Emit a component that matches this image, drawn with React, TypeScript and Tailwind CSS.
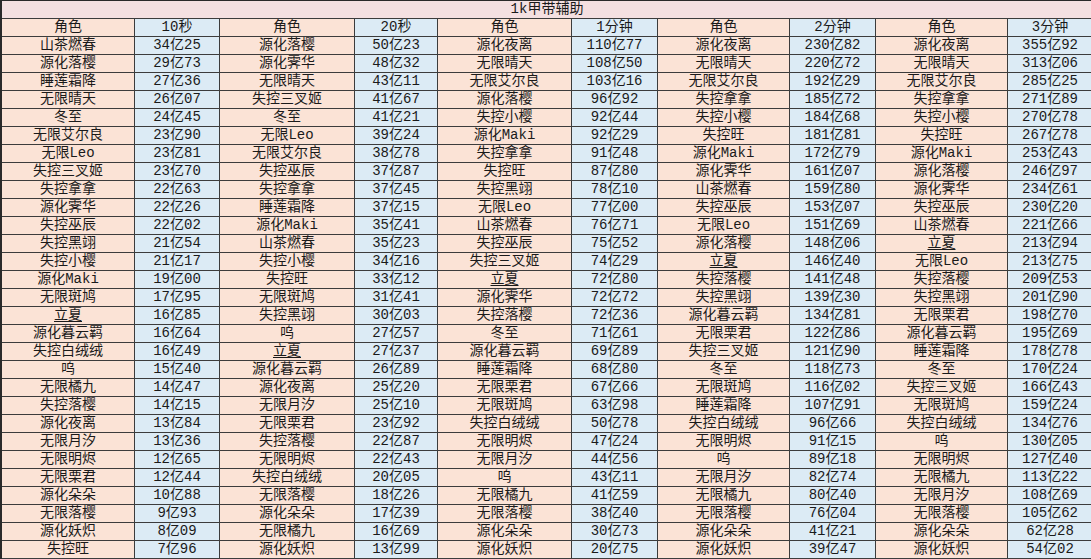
import React from "react";

type Pair = [string, string];

const cols: Pair[][] = [
  [
    ["山茶燃春", "34亿25"], ["源化落樱", "29亿73"], ["睡莲霜降", "27亿36"], ["无限晴天", "26亿07"],
    ["冬至", "24亿45"], ["无限艾尔良", "23亿90"], ["无限Leo", "23亿81"], ["失控三叉姬", "23亿70"],
    ["失控拿拿", "22亿63"], ["源化霁华", "22亿26"], ["失控巫辰", "22亿02"], ["失控黑翊", "21亿54"],
    ["失控小樱", "21亿17"], ["源化Maki", "19亿00"], ["无限斑鸠", "17亿95"], ["立夏", "16亿85"],
    ["源化暮云羁", "16亿64"], ["失控白绒绒", "16亿49"], ["呜", "15亿40"], ["无限橘九", "14亿47"],
    ["失控落樱", "14亿15"], ["源化夜离", "13亿84"], ["无限月汐", "13亿36"], ["无限明烬", "12亿65"],
    ["无限栗君", "12亿44"], ["源化朵朵", "10亿88"], ["无限落樱", "9亿93"], ["源化妖炽", "8亿09"],
    ["失控旺", "7亿96"],
  ],
  [
    ["源化落樱", "50亿23"], ["源化霁华", "48亿32"], ["无限晴天", "43亿11"], ["失控三叉姬", "41亿67"],
    ["冬至", "41亿21"], ["无限Leo", "39亿24"], ["无限艾尔良", "38亿78"], ["失控巫辰", "37亿87"],
    ["失控拿拿", "37亿45"], ["睡莲霜降", "37亿15"], ["源化Maki", "35亿41"], ["山茶燃春", "35亿23"],
    ["失控小樱", "34亿16"], ["失控旺", "33亿12"], ["无限斑鸠", "31亿41"], ["失控黑翊", "30亿03"],
    ["呜", "27亿57"], ["立夏", "27亿37"], ["源化暮云羁", "26亿89"], ["源化夜离", "25亿20"],
    ["无限月汐", "25亿10"], ["无限栗君", "23亿92"], ["失控落樱", "22亿87"], ["无限明烬", "22亿43"],
    ["失控白绒绒", "20亿05"], ["无限落樱", "18亿26"], ["源化朵朵", "17亿39"], ["无限橘九", "16亿69"],
    ["源化妖炽", "13亿99"],
  ],
  [
    ["源化夜离", "110亿77"], ["无限晴天", "108亿50"], ["无限艾尔良", "103亿16"], ["源化落樱", "96亿92"],
    ["失控小樱", "92亿44"], ["源化Maki", "92亿29"], ["失控拿拿", "91亿48"], ["失控旺", "87亿80"],
    ["失控黑翊", "78亿10"], ["无限Leo", "77亿00"], ["山茶燃春", "76亿71"], ["失控巫辰", "75亿52"],
    ["失控三叉姬", "74亿29"], ["立夏", "72亿80"], ["源化霁华", "72亿72"], ["失控落樱", "72亿36"],
    ["冬至", "71亿61"], ["源化暮云羁", "69亿89"], ["睡莲霜降", "68亿80"], ["无限栗君", "67亿66"],
    ["无限斑鸠", "63亿98"], ["失控白绒绒", "50亿78"], ["无限明烬", "47亿24"], ["无限月汐", "44亿56"],
    ["呜", "43亿11"], ["无限橘九", "41亿59"], ["无限落樱", "38亿40"], ["源化朵朵", "30亿73"],
    ["源化妖炽", "20亿75"],
  ],
  [
    ["源化夜离", "230亿82"], ["无限晴天", "220亿72"], ["无限艾尔良", "192亿29"], ["失控拿拿", "185亿72"],
    ["失控小樱", "184亿68"], ["失控旺", "181亿81"], ["源化Maki", "172亿79"], ["源化霁华", "161亿07"],
    ["山茶燃春", "159亿80"], ["失控巫辰", "153亿07"], ["无限Leo", "151亿69"], ["源化落樱", "148亿06"],
    ["立夏", "146亿40"], ["失控落樱", "141亿48"], ["失控黑翊", "139亿30"], ["源化暮云羁", "134亿81"],
    ["无限栗君", "122亿86"], ["失控三叉姬", "121亿90"], ["冬至", "118亿73"], ["无限斑鸠", "116亿02"],
    ["睡莲霜降", "107亿91"], ["失控白绒绒", "96亿66"], ["无限明烬", "91亿15"], ["呜", "89亿18"],
    ["无限月汐", "82亿74"], ["无限橘九", "80亿40"], ["无限落樱", "76亿04"], ["源化朵朵", "41亿21"],
    ["源化妖炽", "39亿47"],
  ],
  [
    ["源化夜离", "355亿92"], ["无限晴天", "313亿06"], ["无限艾尔良", "285亿25"], ["失控拿拿", "271亿89"],
    ["失控小樱", "270亿78"], ["失控旺", "267亿78"], ["源化Maki", "253亿43"], ["源化落樱", "246亿97"],
    ["源化霁华", "234亿61"], ["失控巫辰", "230亿20"], ["山茶燃春", "221亿66"], ["立夏", "213亿94"],
    ["无限Leo", "213亿75"], ["失控落樱", "209亿53"], ["失控黑翊", "201亿90"], ["无限栗君", "198亿70"],
    ["源化暮云羁", "195亿69"], ["睡莲霜降", "178亿78"], ["冬至", "170亿24"], ["失控三叉姬", "166亿43"],
    ["无限斑鸠", "159亿24"], ["失控白绒绒", "134亿76"], ["呜", "130亿05"], ["无限明烬", "127亿40"],
    ["无限橘九", "113亿22"], ["无限月汐", "108亿69"], ["无限落樱", "105亿62"], ["源化朵朵", "62亿28"],
    ["源化妖炽", "54亿02"],
  ],
];

const headers = ["10秒", "20秒", "1分钟", "2分钟", "3分钟"];

const peach = "bg-[#fbe3d6]";
const blue = "bg-[#dcebf5]";
const cellBase =
  "flex items-center justify-center border-r border-b border-[#3c3c3c] leading-[17px] whitespace-nowrap";

export default function App() {
  const rows = Array.from({ length: 29 }, (_, i) => i);
  return (
    <div
      className="w-[1091px] h-[559px] bg-white text-[#1a1a1a] overflow-hidden"
      style={{ fontFamily: '"Liberation Mono", "Noto Sans CJK SC", monospace' }}
    >
      <div className="grid grid-cols-[133px_85px_135px_83px_134px_86px_132px_86px_132px_85px] auto-rows-[18px] border-l-2 border-t border-[#2a2a2a] text-[14px]">
        <div className={`${cellBase} col-span-10 bg-[#f4e0e1]`}>1k甲带辅助</div>
        {headers.map((h) => (
          <React.Fragment key={h}>
            <div className={`${cellBase} ${peach}`}>角色</div>
            <div className={`${cellBase} ${blue}`}>{h}</div>
          </React.Fragment>
        ))}
        {rows.map((r) =>
          cols.map((c, ci) => (
            <React.Fragment key={`${r}-${ci}`}>
              <div className={`${cellBase} ${peach}`}>
                {c[r][0] === "立夏" ? (
                  <span className="underline underline-offset-2 decoration-1">{c[r][0]}</span>
                ) : (
                  c[r][0]
                )}
              </div>
              <div className={`${cellBase} ${blue}`}>{c[r][1]}</div>
            </React.Fragment>
          ))
        )}
      </div>
    </div>
  );
}
